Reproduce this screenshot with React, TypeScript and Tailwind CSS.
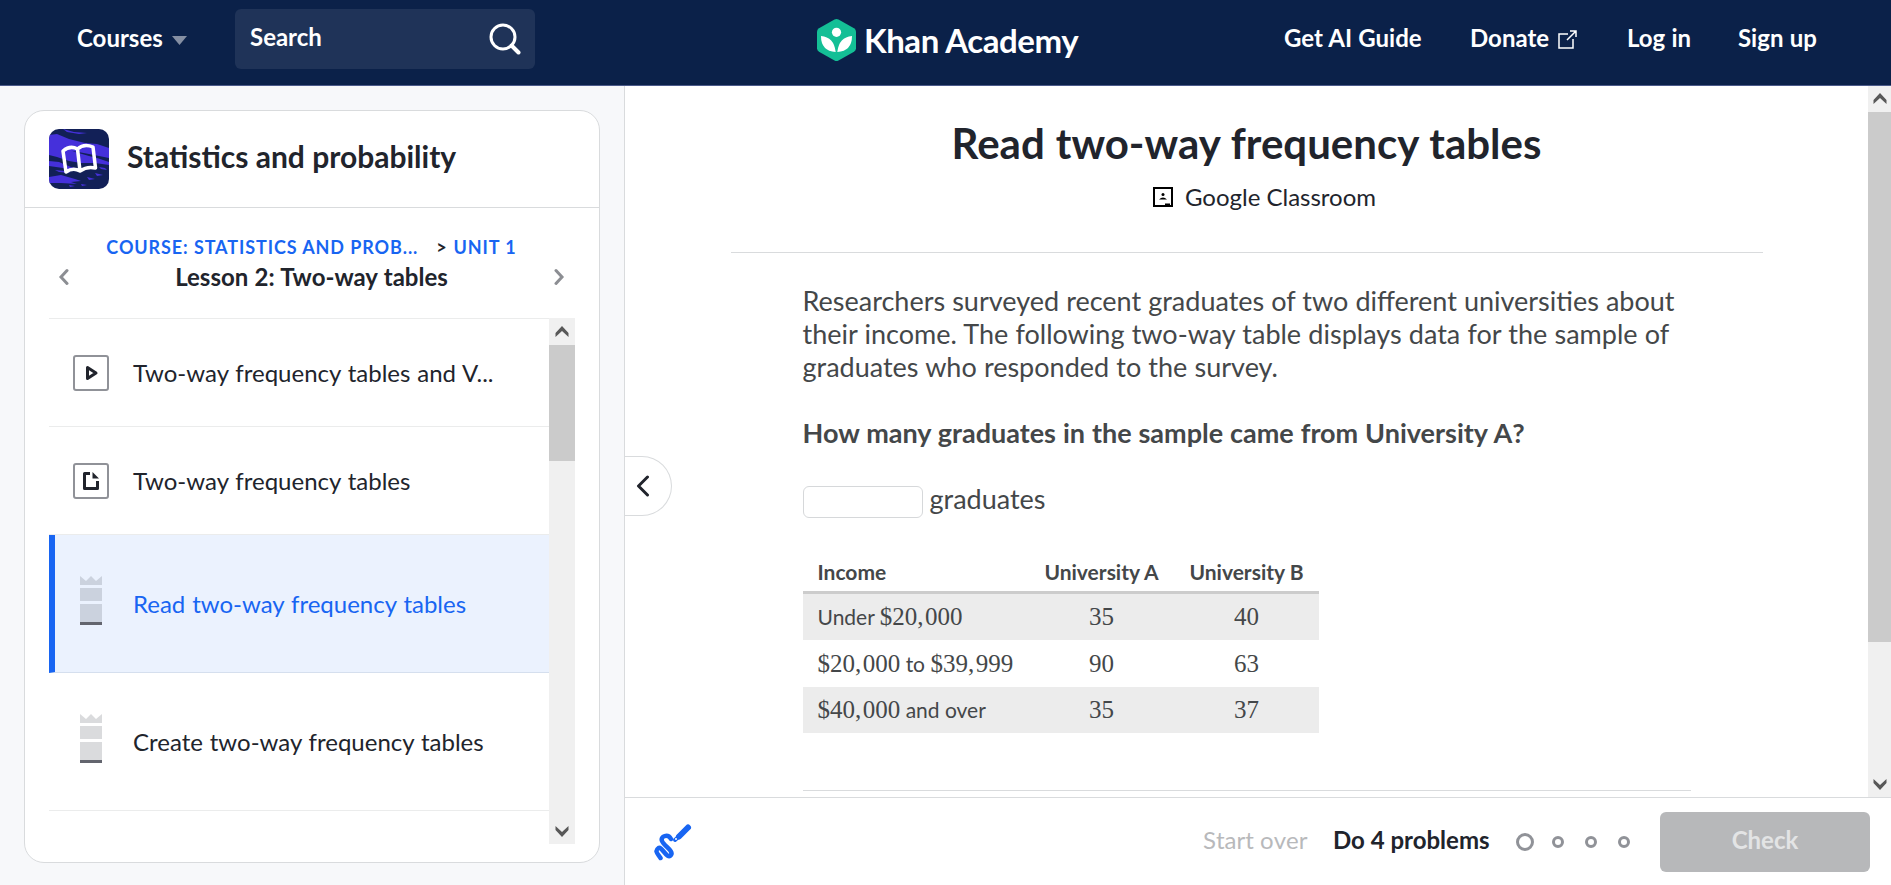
import React from 'react';

const chevronUp = 'M.5 7L7 0L13.500 7V11L7 5L.5 11Z';
const chevronDown = 'M.5 4L7 11L13.500 4V0L7 6L.5 0Z';

function ScrollArrow({ d }: { d: string }) {
  return (
    <svg width="14" height="11" viewBox="0 0 14 11" fill="#585858">
      <path d={d} />
    </svg>
  );
}

function Header() {
  return (
    <header className="flex h-[86px] shrink-0 border-b border-[#4b5a8a] bg-[#0b2149] pl-[77px] text-[24px] font-bold leading-[30px] text-white">
      <div className="flex h-[76px] w-[158px] items-center gap-[9px]">
        <span>Courses</span>
        <svg className="mt-[4px]" width="15" height="9" viewBox="0 0 15 9" fill="#858fa3"><path d="M0 0H15L7.500 9Z" /></svg>
      </div>
      <div className="mt-[9px] flex h-[60px] w-[300px] items-center justify-between rounded-[6px] bg-[#1f3358] pl-[15px] pr-[14px]">
        <span className="pb-[5px]">Search</span>
        <svg width="32" height="32" viewBox="0 0 32 32" fill="none" stroke="#fff" strokeWidth="3" strokeLinecap="round">
          <circle cx="14" cy="14" r="12" /><path d="M22.500 22.500L29.500 29.500" strokeWidth="4" />
        </svg>
      </div>
      <div className="flex h-[80px] w-[749px] items-center pl-[282px]">
        <svg width="39" height="42" viewBox="0 0 39 42">
          <path d="M17.500 .5Q19.500 -.5 21.500 .5L37 9.300Q39 10.500 39 12.700V29.300Q39 31.500 37 32.700L21.500 41.500Q19.500 42.500 17.500 41.500L2 32.700Q0 31.500 0 29.300V12.700Q0 10.500 2 9.300Z" fill="#14bf96" />
          <circle cx="19.500" cy="13.300" r="4.600" fill="#fff" />
          <path d="M4 17Q17 18 18.700 33Q4 32 4 17ZM35 17Q22 18 20.300 33Q35 32 35 17Z" fill="#fff" />
        </svg>
        <span className="ml-[8px] whitespace-nowrap text-[33px] tracking-[-0.45px]">Khan Academy</span>
      </div>
      <nav className="flex h-[76px] items-center whitespace-nowrap [word-spacing:0.4px]">
        <span className="w-[186px]">Get AI Guide</span>
        <span className="flex w-[157px] items-center gap-[9px]">
          Donate
          <svg className="mt-[3px]" width="19" height="19" viewBox="0 0 19 19" fill="none" stroke="#fff" strokeWidth="1.500">
            <path d="M10 4H1V18H15V9M9 10L18 1M12 1H18V7" />
          </svg>
        </span>
        <span className="w-[111px]">Log in</span>
        <span>Sign up</span>
      </nav>
    </header>
  );
}

function CourseIcon() {
  return (
    <svg width="60" height="60" viewBox="0 0 60 60" className="rounded-[10px]">
      <rect width="60" height="60" fill="#122057" />
      <path d="M0 6L8 5L20 10L36 14L48 15L60 19V29L50 27L40 25L24 22L12 18L0 15ZM14 0L25 3L38 4L30 5L18 3ZM0 13L14 18L26 23L40 27L48 29L60 33V36L46 34L32 34L20 32L8 28L0 26ZM0 32L10 33L22 38L34 41L26 42L14 39L0 37ZM0 48L12 46L26 50L32 52L22 53L28 55L12 54L0 54Z" fill="#4530db" />
      <path d="M46 44L54 46L48 47ZM38 48L46 50L40 51ZM20 56L26 57L21 58ZM32 55L38 56L33 57ZM6 41L16 42L22 44L10 43ZM50 38L56 39L58 41L52 40Z" fill="#4530db" />
      <path d="M14 22Q21 16 28.500 20Q35 14 44 18L46.500 39Q38 37 31 42Q24 38 17 43ZM28.500 20L31 42" fill="none" stroke="#fff" strokeWidth="3.500" strokeLinejoin="round" />
    </svg>
  );
}

function Mastery({ active = false }: { active?: boolean }) {
  return (
    <svg width="22" height="49" viewBox="0 0 22 49" className="mx-[7px] mb-[6px]" fill={active ? '#cbd2de' : '#dadbdd'}>
      <path d="M0 0L6 5L11 0L16 5L22 0V9H0ZM0 12H22V25H0ZM0 28H22V46H0Z" />
      <rect y="46" width="22" height="3" fill="#63656e" />
    </svg>
  );
}

function BoxIcon({ kind }: { kind: 'video' | 'article' }) {
  return (
    <span className="flex size-[36px] items-center justify-center rounded-[3px] border-2 border-[#909298] bg-white">
      {kind === 'video' ? (
        <svg width="14" height="16" viewBox="0 0 14 16" fill="none" stroke="#21242c" strokeWidth="3" strokeLinejoin="round" className="ml-[2px]"><path d="M2.500 2.500V13.500L11 8Z" /></svg>
      ) : (
        <svg width="16" height="18" viewBox="0 0 16 18"><path d="M7 1.500H1.500V16.500H14.500V9" fill="none" stroke="#21242c" strokeWidth="3" strokeLinejoin="round" /><path d="M9.500 0L16 6.500H9.500Z" fill="#21242c" /></svg>
      )}
    </span>
  );
}

function Sidebar() {
  return (
    <aside className="flex w-[625px] shrink-0 flex-col border-r border-[#d9dbdd] bg-[#f7f8fa] pb-[22px] pl-[24px] pr-[24px] pt-[24px]">
      <div className="flex min-h-0 flex-1 flex-col rounded-[20px] border border-[#d9dbdd] bg-white">
        <div className="flex h-[97px] shrink-0 items-center gap-[18px] border-b border-[#d9dbdd] pl-[24px] text-[30px] font-bold text-[#21242c]">
          <CourseIcon />
          <span className="pb-[5px]">Statistics and probability</span>
        </div>
        <div className="flex h-[110px] shrink-0 items-center justify-between pl-[33px] pr-[34px]">
          <svg width="11" height="18" viewBox="0 0 11 18" className="mt-[28px]" fill="none" stroke="#8c8e93" strokeWidth="3" strokeLinecap="round"><path d="M9 2.500L3 9L9 15.500" /></svg>
          <div className="flex flex-col items-center pt-[2px]">
            <div className="flex h-[26px] items-center whitespace-nowrap text-[18px] font-bold tracking-[0.9px] text-[#1865f2]">
              <span>COURSE: STATISTICS AND PROB...</span>
              <span className="ml-[18px] mr-[6px] text-[#21242c]">&gt;</span>
              <span>UNIT 1</span>
            </div>
            <div className="text-[24px] font-bold leading-[34px] text-[#21242c] [word-spacing:0.5px]">Lesson 2: Two-way tables</div>
          </div>
          <svg width="11" height="18" viewBox="0 0 11 18" className="mt-[28px]" fill="none" stroke="#8c8e93" strokeWidth="3" strokeLinecap="round"><path d="M2 2.500L8 9L2 15.500" /></svg>
        </div>
        <div className="mx-[24px] flex h-[526px] shrink-0 text-[24px] text-[#21242c] [word-spacing:0.75px]">
          <div className="flex w-[500px] flex-col border-t border-[#ebecec]">
            <div className="flex h-[108px] items-center gap-[24px] border-b border-[#ebecec] pl-[24px]">
              <BoxIcon kind="video" /><span>Two-way frequency tables and V...</span>
            </div>
            <div className="flex h-[108px] items-center gap-[24px] border-b border-[#ebecec] pl-[24px]">
              <BoxIcon kind="article" /><span>Two-way frequency tables</span>
            </div>
            <div className="flex h-[138px] items-center gap-[24px] border-b border-l-[6px] border-b-[#d5dfee] border-l-[#1865f2] bg-[#ebf2fe] pl-[18px] text-[#1865f2]">
              <Mastery active /><span>Read two-way frequency tables</span>
            </div>
            <div className="flex h-[138px] items-center gap-[24px] border-b border-[#ebecec] pl-[24px]">
              <Mastery /><span>Create two-way frequency tables</span>
            </div>
          </div>
          <div className="flex w-[26px] flex-col items-center justify-between bg-[#f0f0f0]">
            <div className="flex w-full flex-col items-center">
              <div className="flex h-[27px] items-center"><ScrollArrow d={chevronUp} /></div>
              <div className="h-[116px] w-full bg-[#cbcbcb]" />
            </div>
            <div className="flex h-[26px] items-center"><ScrollArrow d={chevronDown} /></div>
          </div>
        </div>
      </div>
    </aside>
  );
}

const rows = [
  { label: <>Under <Num>$20,000</Num></>, a: '35', b: '40' },
  { label: <><Num>$20,000</Num> to <Num>$39,999</Num></>, a: '90', b: '63' },
  { label: <><Num>$40,000</Num> and over</>, a: '35', b: '37' },
];

function Num({ children }: { children: string }) {
  const [head, tail] = children.split(',');
  return (
    <span className="font-['Liberation_Serif',serif] text-[25px]">
      {head}
      {tail && <span className="mr-[1.500px]">,</span>}
      {tail}
    </span>
  );
}

function Exercise() {
  return (
    <div className="relative flex min-h-0 flex-1 overflow-hidden">
      <div className="flex flex-1 flex-col items-center overflow-hidden">
        <h1 className="mt-[31px] text-[42px] font-bold leading-[52px] text-[#21242c] [word-spacing:0.8px]">Read two-way frequency tables</h1>
        <div className="mt-[12px] flex h-[32px] items-center gap-[12px] pl-[36px] text-[24px] text-[#21242c]">
          <svg width="20" height="20" viewBox="0 0 20 20"><path d="M1 1H19V19H1Z" fill="#fff" stroke="#000" strokeWidth="2" /><circle cx="10" cy="7.500" r="1.500" /><path d="M6 12.500Q10 8.500 14 12.500ZM12 16.500H17V19H12Z" /></svg>
          <span>Google Classroom</span>
        </div>
        <div className="mt-[39px] h-px w-[1032px] shrink-0 bg-[#d9dbdd]" />
        <div className="mt-[31px] flex w-[888px] flex-col text-[27px] leading-[33px] text-[#444749]">
          <p className="whitespace-nowrap">
            <span className="[word-spacing:0.15px]">Researchers surveyed recent graduates of two different universities about</span>
            <br />
            <span className="[word-spacing:0.3px]">their income. The following two-way table displays data for the sample of</span>
            <br />
            <span className="[word-spacing:0.25px]">graduates who responded to the survey.</span>
          </p>
          <p className="mt-[33px] font-bold [word-spacing:0.35px]">How many graduates in the sample came from University A?</p>
          <div className="mt-[33px] flex gap-[7px]">
            <span className="mt-[4px] h-[32px] w-[120px] rounded-[6px] border border-[#d6d8da] bg-white" />
            <span>graduates</span>
          </div>
          <div className="mt-[34px] flex w-[516px] flex-col text-[21px]">
            <div className="flex h-[42px] items-center border-b-[3px] border-[#cccccc] pb-[1px] pl-[15px] font-bold">
              <span className="w-[211px]">Income</span>
              <span className="w-[145px] pl-[1px] text-center">University A</span>
              <span className="w-[145px] pl-[1px] text-center">University B</span>
            </div>
            {rows.map((r, i) => (
              <div key={i} className={i % 2 ? 'flex h-[47px] items-center pb-[1px] pl-[15px]' : 'flex h-[46px] items-center bg-[#ececec] pb-[1px] pl-[15px]'}>
                <span className="w-[211px] whitespace-nowrap">{r.label}</span>
                <span className="w-[145px] pl-[1px] text-center"><Num>{r.a}</Num></span>
                <span className="w-[145px] pl-[1px] text-center"><Num>{r.b}</Num></span>
              </div>
            ))}
          </div>
          <div className="mt-[57px] h-px bg-[#d9dbdd]" />
        </div>
      </div>
      <div className="flex w-[23px] shrink-0 flex-col items-center justify-between bg-[#f0f0f0]">
        <div className="flex w-full flex-col items-center">
          <div className="flex h-[26px] items-center pb-[2px]"><ScrollArrow d={chevronUp} /></div>
          <div className="h-[530px] w-[23px] bg-[#cbcbcb]" />
        </div>
        <div className="flex h-[25px] items-center"><ScrollArrow d={chevronDown} /></div>
      </div>
      <button className="absolute left-[-1px] top-[370px] flex h-[60px] w-[48px] items-center rounded-r-[30px] border border-l-0 border-[#d9dbdd] bg-white pl-[12px]">
        <svg width="14" height="22" viewBox="0 0 14 22" fill="none" stroke="#21242c" strokeWidth="3" strokeLinecap="round" strokeLinejoin="round"><path d="M11.500 2L2.500 11L11.500 20" /></svg>
      </button>
    </div>
  );
}

function Footer() {
  return (
    <footer className="flex h-[88px] shrink-0 items-center border-t border-[#d9dbdd] pl-[29px] pr-[21px] text-[24px]">
      <svg width="40" height="38" viewBox="0 0 40 38" fill="none" stroke="#1865f2" strokeLinecap="round" strokeLinejoin="round">
        <path d="M17 16C14 10.500 6 13 8 18C10 23 20 28 17 32C13 37 8 23 4.500 25C0 28 4 31 6.500 35" strokeWidth="4.500" />
        <path d="M25 13.500L34 4.500" strokeWidth="6" />
        <path d="M21 17L25 13.500" strokeWidth="4" />
        <circle cx="22" cy="16" r="1" fill="#fff" stroke="none" />
      </svg>
      <div className="ml-auto flex items-center">
        <span className="w-[130px] pb-[4px] text-[#b8b9bb] [font-kerning:none]">Start over</span>
        <span className="w-[183px] pb-[4px] font-bold text-[#21242c]">Do 4 problems</span>
        <div className="flex w-[144px] items-center">
          <span className="mr-[18px] size-[18px] rounded-full border-[3px] border-[#909298]" />
          <div className="flex gap-[21px]">
            <span className="size-[12px] rounded-full border-[3px] border-[#909298]" />
            <span className="size-[12px] rounded-full border-[3px] border-[#909298]" />
            <span className="size-[12px] rounded-full border-[3px] border-[#909298]" />
          </div>
        </div>
        <span className="flex h-[60px] w-[210px] items-center justify-center rounded-[6px] bg-[#b7b8ba] pb-[3px] font-bold text-[#e3e4e5]">Check</span>
      </div>
    </footer>
  );
}

export default function App() {
  return (
    <div className="flex h-[885px] w-[1891px] flex-col overflow-hidden bg-white font-['Lato',sans-serif]">
      <Header />
      <div className="flex min-h-0 flex-1">
        <Sidebar />
        <main className="flex min-w-0 flex-1 flex-col">
          <Exercise />
          <Footer />
        </main>
      </div>
    </div>
  );
}
